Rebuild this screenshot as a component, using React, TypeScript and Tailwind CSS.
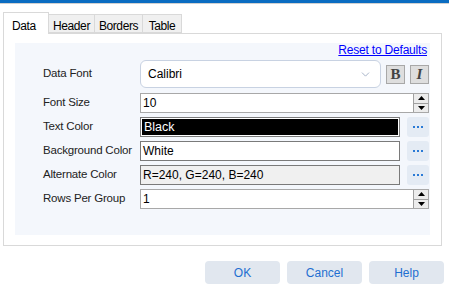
import { ChevronDown } from "lucide-react";

const font = { fontFamily: '"Liberation Sans", Arial, sans-serif' };

function Spinner() {
    return (
        <div className="flex flex-col w-[15px] h-full border-l border-[#a0a0a0]">
            <div className="flex-1 flex items-center justify-center bg-[#ececec] border-b border-[#a0a0a0]">
                <svg width="7" height="4" viewBox="0 0 7 4"><path d="M0 4 L3.5 0 L7 4 Z" fill="#000" /></svg>
            </div>
            <div className="flex-1 flex items-center justify-center bg-[#ececec]">
                <svg width="7" height="4" viewBox="0 0 7 4"><path d="M0 0 L3.5 4 L7 0 Z" fill="#000" /></svg>
            </div>
        </div>
    );
}

function Dots() {
    return (
        <button className="w-[22px] h-[20px] rounded-[3px] bg-[#e4ebf4] flex items-center justify-center gap-[2px]">
            <span className="w-[2px] h-[2px] bg-[#2a7ad6]" />
            <span className="w-[2px] h-[2px] bg-[#2a7ad6]" />
            <span className="w-[2px] h-[2px] bg-[#2a7ad6]" />
        </button>
    );
}

function Label({ children }: { children: string }) {
    return <div className="w-[97px] shrink-0 text-[11.5px] tracking-[-0.2px] text-[#222]">{children}</div>;
}

export default function App() {
    return (
        <div className="w-[449px] h-[295px] bg-white flex flex-col" style={font}>
            <div className="h-[3px] bg-[#0a6cc1]" />
            <div className="h-[1px] bg-[#d0d0d0]" />

            <div className="flex items-end pl-[3px] pt-[8px] text-[12px] tracking-[-0.4px]">
                <div className="h-[22px] w-[46px] border border-[#d9d9d9] border-b-0 bg-white pl-[8px] pt-[4px] text-black relative z-10 -mb-px">
                    Data
                </div>
                <div className="h-[19px] w-[46px] text-center border border-[#d9d9d9] border-l-0 bg-[#f0f0f0] pt-[2px]">Header</div>
                <div className="h-[19px] w-[48px] text-center border border-[#d9d9d9] border-l-0 bg-[#f0f0f0] pt-[2px]">Borders</div>
                <div className="h-[19px] w-[39px] text-center border border-[#d9d9d9] border-l-0 bg-[#f0f0f0] pt-[2px]">Table</div>
            </div>

            <div className="mx-[3px] w-[439px] h-[213px] border border-[#d9d9d9] px-[11px] pt-[9px] pb-[10px]">
                <div className="h-full bg-[#f4f7fc] pl-[28px] pr-[1px] flex flex-col">
                    <div className="flex justify-end pr-[2px] pt-[1px] h-[16px]">
                        <span className="text-[12px] tracking-[-0.2px] text-[#0000ff] underline leading-[12px]">Reset to Defaults</span>
                    </div>

                    <div className="flex items-center h-[28px] mt-[1px]">
                        <Label>Data Font</Label>
                        <div className="w-[241px] h-[28px] rounded-[6px] border border-[#c8d2e2] bg-white flex items-center pl-[7px] pr-[8px] text-[12px]">
                            <span className="flex-1">Calibri</span>
                            <ChevronDown size={13} strokeWidth={1.6} className="text-[#9aa9c0]" />
                        </div>
                        <div className="ml-[5px] w-[19px] h-[19px] border border-[#a8a8a8] bg-[#dedede] flex items-center justify-center text-[15px] font-bold text-[#444]" style={{ fontFamily: '"Liberation Serif", serif' }}>B</div>
                        <div className="ml-[5px] w-[19px] h-[19px] border border-[#a8a8a8] bg-[#dedede] flex items-center justify-center text-[15px] font-bold italic text-[#444]" style={{ fontFamily: '"Liberation Serif", serif' }}>I</div>
                    </div>

                    <div className="flex items-center h-[20px] mt-[5px]">
                        <Label>Font Size</Label>
                        <div className="w-[289px] h-[20px] border border-[#a8a8a8] bg-white flex text-[12px]">
                            <span className="flex-1 pl-[2px] leading-[18px]">10</span>
                            <Spinner />
                        </div>
                    </div>

                    <div className="flex items-center h-[20px] mt-[4px]">
                        <Label>Text Color</Label>
                        <div className="w-[260px] h-[20px] border border-[#7a7a7a] bg-white p-[1px]">
                            <div className="h-full bg-black text-white text-[12.5px] pl-[2px] leading-[16px]">Black</div>
                        </div>
                        <div className="ml-[7px]"><Dots /></div>
                    </div>

                    <div className="flex items-center h-[20px] mt-[4px]">
                        <Label>Background Color</Label>
                        <div className="w-[260px] h-[20px] border border-[#7a7a7a] bg-white text-[12px] pl-[2px] leading-[18px]">White</div>
                        <div className="ml-[7px]"><Dots /></div>
                    </div>

                    <div className="flex items-center h-[20px] mt-[4px]">
                        <Label>Alternate Color</Label>
                        <div className="w-[260px] h-[20px] border border-[#7a7a7a] bg-[#f0f0f0] text-[12px] pl-[2px] leading-[18px]">R=240, G=240, B=240</div>
                        <div className="ml-[7px]"><Dots /></div>
                    </div>

                    <div className="flex items-center h-[20px] mt-[4px]">
                        <Label>Rows Per Group</Label>
                        <div className="w-[289px] h-[20px] border border-[#a8a8a8] bg-white flex text-[12px]">
                            <span className="flex-1 pl-[2px] leading-[18px]">1</span>
                            <Spinner />
                        </div>
                    </div>
                </div>
            </div>

            <div className="flex justify-end gap-[7px] pr-[5px] pt-[15px]">
                {["OK", "Cancel", "Help"].map((t) => (
                    <button key={t} className="w-[75px] h-[23px] rounded-[4px] bg-[#e1e7ef] text-[12px] text-[#1f6fd1]">
                        {t}
                    </button>
                ))}
            </div>
        </div>
    );
}
